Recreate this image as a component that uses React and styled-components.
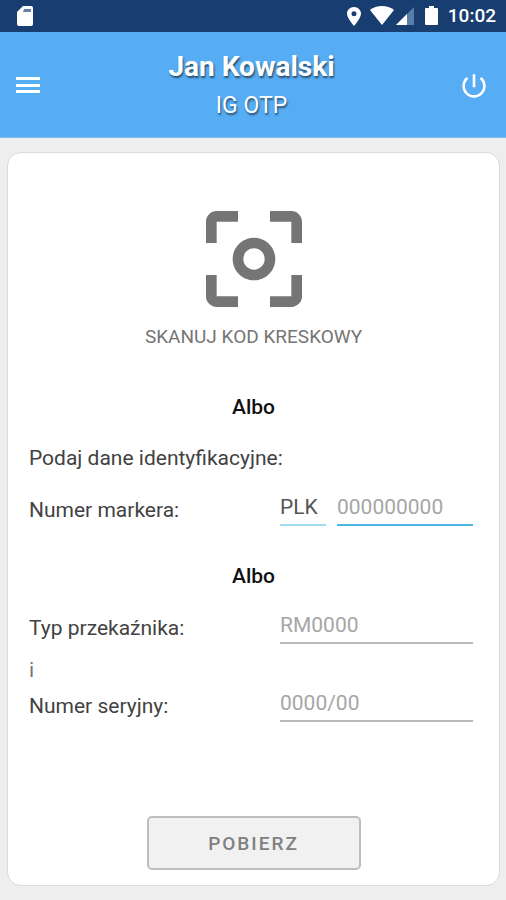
import React from "react";
import styled, { createGlobalStyle } from "styled-components";

const GlobalStyle = createGlobalStyle`
  *, *::before, *::after { box-sizing: border-box; }
  body {
    margin: 0;
    background: #eeeeee;
    font-family: Roboto, "Liberation Sans", sans-serif;
    color: #424242;
  }
  button, input { font: inherit; }
`;

const Screen = styled.div`
  display: flex;
  flex-direction: column;
  min-height: 100vh;
`;

const StatusBar = styled.div`
  display: flex;
  align-items: center;
  justify-content: space-between;
  height: 32px;
  padding: 0 10px 0 16px;
  background: #173d71;
  color: #ffffff;
`;

const StatusGroup = styled.div`
  display: flex;
  align-items: center;
`;

const StatusIcon = styled.svg`
  display: block;
  width: ${({ $w }) => $w}px;
  height: 20px;
  margin-right: ${({ $gap = 0 }) => $gap}px;
  fill: currentColor;
`;

const Clock = styled.time`
  font-size: 19px;
  font-weight: 500;
  line-height: 32px;
`;

const Header = styled.header`
  display: flex;
  align-items: center;
  justify-content: space-between;
  height: 106px;
  padding: 3px 19px 0 16px;
  background: #57adf4;
  border-bottom: 1px solid #7dbdf0;
  color: #ffffff;
`;

const IconButton = styled.button`
  display: flex;
  padding: 0;
  border: 0;
  background: none;
  color: inherit;
  cursor: pointer;

  svg {
    display: block;
    width: 26px;
    height: 26px;
    fill: currentColor;
  }
`;

const Titles = styled.div`
  text-align: center;
  text-shadow: 1px 2px 2px rgba(0, 0, 0, 0.55);
`;

const UserName = styled.h1`
  margin: 0;
  font-size: 28px;
  font-weight: 700;
  line-height: 40px;
`;

const AppName = styled.p`
  margin: 0;
  font-size: 23px;
  line-height: 38px;
`;

const Card = styled.main`
  display: flex;
  flex: 1;
  flex-direction: column;
  margin: 14px 6px 14px 7px;
  padding: 42px 21px 15px;
  border: 1px solid #d9dada;
  border-radius: 14px;
  background: #ffffff;
`;

const ScanButton = styled.button`
  display: flex;
  flex-direction: column;
  align-items: center;
  align-self: center;
  padding: 0;
  border: 0;
  background: none;
  color: #757575;
  font-size: 19px;
  line-height: 28px;
  cursor: pointer;

  svg {
    display: block;
    width: 128px;
    height: 128px;
    fill: currentColor;
  }
`;

const Divider = styled.p`
  margin: ${({ $top }) => $top}px 0 0;
  color: #111111;
  font-size: 21px;
  font-weight: 500;
  line-height: 28px;
  text-align: center;
`;

const Hint = styled.p`
  margin: ${({ $top = 0 }) => $top}px 0 0;
  color: ${({ $muted }) => ($muted ? "#757575" : "inherit")};
  font-size: 21px;
  line-height: 28px;
`;

const FieldRow = styled.div`
  display: grid;
  grid-template-columns: 251px minmax(0, 1fr);
  align-items: center;
  margin-top: ${({ $top }) => $top}px;
  padding-right: 5px;
`;

const Label = styled.label`
  padding-top: 4px;
  font-size: 21px;
  line-height: 28px;
`;

const Inputs = styled.div`
  display: flex;
  gap: 11px;
`;

const underline = { focus: "#4db6e2", soft: "#a5dbee", plain: "#bababa" };

const TextInput = styled.input`
  flex: ${({ $w }) => ($w ? `0 0 ${$w}px` : "1")};
  min-width: 0;
  height: 36px;
  padding: 0;
  border: 0;
  border-bottom: 2px solid ${({ $line }) => underline[$line]};
  border-radius: 0;
  outline: 0;
  background: none;
  color: #555555;
  font-size: 21px;

  &::placeholder {
    color: #a6a6a6;
    opacity: 1;
  }
`;

const SubmitButton = styled.button`
  align-self: center;
  width: 214px;
  height: 54px;
  margin-top: auto;
  padding: 0;
  border: 2px solid #bebebe;
  border-radius: 5px;
  background: #f1f1f1;
  color: #808080;
  font-size: 19px;
  font-weight: 500;
  letter-spacing: 2px;
  cursor: pointer;
`;

export default function App() {
  return (
    <Screen>
      <GlobalStyle />
      <StatusBar>
        <StatusIcon $w={18} viewBox="0 0 18 20" aria-hidden="true">
          <path d="M7 0h8q2 0 2 2v16q0 2-2 2H3q-2 0-2-2V6z" />
          <path d="M8 3h7v3H7z" fill="#6d7f9e" />
        </StatusIcon>
        <StatusGroup>
          <StatusIcon $w={14} $gap={9} viewBox="0 0 14 20" aria-hidden="true">
            <path
              fillRule="evenodd"
              d="M7 1C3 1 0 4 0 7.6 0 12.500 7 20 7 20s7-7.500 7-12.400C14 4 11 1 7 1zm0 4.200a2.500 2.500 0 1 1 0 5 2.500 2.500 0 0 1 0-5z"
            />
          </StatusIcon>
          <StatusIcon $w={24} $gap={2} viewBox="0 0 24 20" aria-hidden="true">
            <path d="M0 4Q5 0 12 0t12 4L12 19z" />
          </StatusIcon>
          <StatusIcon $w={18} $gap={11} viewBox="0 0 18 20" aria-hidden="true">
            <path d="M18 1v18H0z" fill="#587da6" />
            <path d="M11 8v11H0z" />
          </StatusIcon>
          <StatusIcon $w={13} $gap={10} viewBox="0 0 13 20" aria-hidden="true">
            <path d="M4 0h5v2h3q1 0 1 1v15q0 1-1 1H1q-1 0-1-1V3q0-1 1-1h3z" />
          </StatusIcon>
          <Clock>10:02</Clock>
        </StatusGroup>
      </StatusBar>

      <Header>
        <IconButton type="button" aria-label="Menu">
          <svg viewBox="0 0 26 26" aria-hidden="true">
            <path d="M0 4h24v3H0zM0 11h24v3H0zM0 17h24v3H0z" />
          </svg>
        </IconButton>
        <Titles>
          <UserName>Jan Kowalski</UserName>
          <AppName>IG OTP</AppName>
        </Titles>
        <IconButton type="button" aria-label="Wyloguj">
          <svg viewBox="2 2 20 20" aria-hidden="true">
            <path d="M13 3h-2v10h2V3zm4.830 2.170l-1.420 1.420C17.990 7.860 19 9.810 19 12c0 3.870-3.130 7-7 7s-7-3.130-7-7c0-2.190 1.010-4.140 2.580-5.420L6.170 5.170C4.230 6.820 3 9.260 3 12c0 4.970 4.030 9 9 9s9-4.030 9-9c0-2.740-1.230-5.180-3.170-6.830z" />
          </svg>
        </IconButton>
      </Header>

      <Card>
        <ScanButton type="button">
          <svg viewBox="0 0 24 24" aria-hidden="true">
            <path d="M5 15H3v4c0 1.100.9 2 2 2h4v-2H5v-4zM5 5h4V3H5c-1.100 0-2 .9-2 2v4h2V5zm14-2h-4v2h4v4h2V5c0-1.100-.9-2-2-2zm0 16h-4v2h4c1.100 0 2-.9 2-2v-4h-2v4zM12 8c-2.210 0-4 1.790-4 4s1.790 4 4 4 4-1.790 4-4-1.790-4-4-4zm0 6c-1.100 0-2-.9-2-2s.9-2 2-2 2 .9 2 2-.9 2-2 2z" />
          </svg>
          SKANUJ KOD KRESKOWY
        </ScanButton>

        <Divider $top={42}>Albo</Divider>
        <Hint $top={23}>Podaj dane identyfikacyjne:</Hint>
        <FieldRow $top={18}>
          <Label htmlFor="marker">Numer markera:</Label>
          <Inputs>
            <TextInput $w={46} $line="soft" aria-label="Prefiks markera" defaultValue="PLK" />
            <TextInput $line="focus" id="marker" placeholder="000000000" />
          </Inputs>
        </FieldRow>

        <Divider $top={36}>Albo</Divider>
        <FieldRow $top={18}>
          <Label htmlFor="relay-type">Typ przekaźnika:</Label>
          <Inputs>
            <TextInput $line="plain" id="relay-type" placeholder="RM0000" />
          </Inputs>
        </FieldRow>
        <Hint $top={12} $muted>
          i
        </Hint>
        <FieldRow $top={2}>
          <Label htmlFor="serial">Numer seryjny:</Label>
          <Inputs>
            <TextInput $line="plain" id="serial" placeholder="0000/00" />
          </Inputs>
        </FieldRow>

        <SubmitButton type="submit">POBIERZ</SubmitButton>
      </Card>
    </Screen>
  );
}
